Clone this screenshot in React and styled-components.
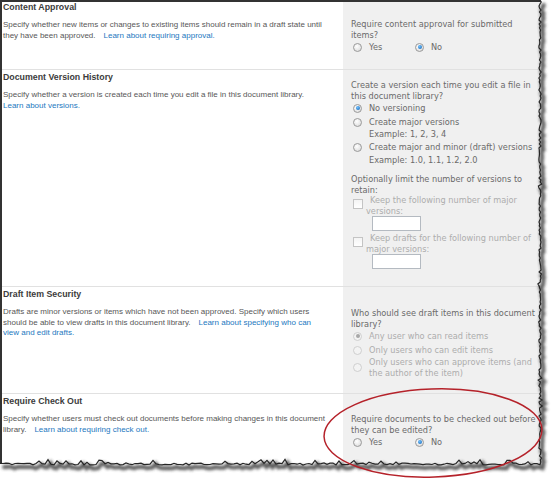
import React from 'react';
import styled, { createGlobalStyle } from 'styled-components';

const GlobalStyle = createGlobalStyle`
  html, body {
    margin: 0;
    padding: 0;
    background: #fff;
    overflow: hidden;
  }
`;

const Page = styled.div`
  position: relative;
  width: 554px;
  height: 480px;
  overflow: hidden;
  background: #fff;
`;

const Frame = styled.div`
  box-sizing: border-box;
  width: 554px;
  height: 480px;
  border-top: 2px solid #333;
  border-left: 2px solid #333;
  display: flex;
  flex-direction: column;
`;

const Section = styled.div`
  display: grid;
  grid-template-columns: 341px 1fr;
  height: ${(p) => p.$h}px;
  flex: ${(p) => (p.$grow ? 1 : 'none')};
  border-top: ${(p) => (p.$first ? 'none' : '1px solid #e1e1e1')};
`;

const Info = styled.div`
  padding: ${(p) => p.$pt}px 0 0 1px;
  font-family: 'Liberation Sans', Arial, sans-serif;
`;

const Title = styled.div`
  font-size: 8.8px;
  font-weight: bold;
  line-height: 10px;
  color: #3c3c3c;
  white-space: nowrap;
`;

const Desc = styled.div`
  margin-top: 8px;
  font-size: 8px;
  line-height: 10.5px;
  color: #575757;
  white-space: nowrap;
`;

const Link = styled.a`
  color: #1c78c0;
  text-decoration: none;
  margin-left: ${(p) => p.$gap || 0}px;
`;

const Controls = styled.div`
  background: #f0f0f0;
  padding: ${(p) => p.$pt}px 0 0 8px;
  font-family: 'DejaVu Sans', Verdana, sans-serif;
  font-size: 8.2px;
  line-height: 10.5px;
  color: #6a6a6a;
  white-space: nowrap;
`;

const Question = styled.div`
  color: ${(p) => (p.$off ? '#adadad' : '#6a6a6a')};
  margin-top: ${(p) => p.$mt || 0}px;
`;

const Row = styled.div`
  display: flex;
  align-items: center;
`;

const Choice = styled.div`
  display: flex;
  align-items: center;
  width: ${(p) => (p.$w ? `${p.$w}px` : 'auto')};
  min-height: 14px;
  padding-left: 2px;
  color: ${(p) => (p.$off ? '#adadad' : '#6a6a6a')};
`;

const Radio = styled.span`
  position: relative;
  box-sizing: border-box;
  flex: none;
  width: 9px;
  height: 9px;
  border-radius: 50%;
  border: 1px solid ${(p) => (p.$off ? '#cfcfcf' : '#9a9a9a')};
  background: ${(p) => (p.$off ? '#f3f3f3' : 'radial-gradient(circle at 40% 35%, #fff, #d6d6d6)')};
  margin-right: 7px;

  &::after {
    content: '';
    display: ${(p) => (p.$on ? 'block' : 'none')};
    position: absolute;
    left: 1.5px;
    top: 1.5px;
    width: 4px;
    height: 4px;
    border-radius: 50%;
    background: ${(p) => (p.$off ? '#a8a8a8' : 'radial-gradient(circle at 40% 35%, #6fc0ff, #0d5fb0)')};
  }
`;

const Example = styled.div`
  padding-left: 18px;
  line-height: 11.5px;
`;

const CheckItem = styled.div`
  display: flex;
  align-items: flex-start;
  margin-top: ${(p) => p.$mt || 0}px;
  padding-left: 2px;
  color: #adadad;
`;

const Check = styled.span`
  box-sizing: border-box;
  flex: none;
  width: 10px;
  height: 10px;
  margin-top: 4px;
  margin-right: 3px;
  border: 1px solid #c4c4c4;
  background: linear-gradient(#f4f4f4, #fff);
`;

const Indent = styled.span`
  padding-left: 4px;
`;

const NumBox = styled.div`
  box-sizing: border-box;
  width: 49px;
  height: 15px;
  margin-left: 6px;
  background: #fff;
  border: 1px solid #b4bac1;
`;

const Overlay = styled.svg`
  position: absolute;
  left: 0;
  top: 0;
  pointer-events: none;
`;

function makeRand(seed) {
  let s = seed;
  return () => {
    s = (s * 1103515245 + 12345) % 2147483648;
    return s / 2147483648;
  };
}

function TornEdge() {
  const rand = makeRand(42);
  const pts = [];
  for (let y = 0; y <= 462; y += 2) {
    const big = rand() > 0.85 ? (rand() - 0.5) * 3 : 0;
    pts.push([540 + (rand() - 0.5) * 2.2 + big, y]);
  }
  for (let x = 540; x >= 0; x -= 3) {
    const bump = rand() > 0.88 ? -2 - rand() * 2 : 0;
    pts.push([x, 464 + (rand() - 0.5) * 2 + bump]);
  }
  const line = pts.map((p) => `${p[0].toFixed(1)},${p[1].toFixed(1)}`).join(' ');
  const outside = `M540,0 L${line} L0,480 L554,480 L554,0 Z`;

  return (
    <Overlay width="554" height="480" viewBox="0 0 554 480">
      <defs>
        <filter id="blur" x="-10%" y="-10%" width="120%" height="120%">
          <feGaussianBlur stdDeviation="1.4" />
        </filter>
      </defs>
      <path d={outside} fill="#fff" />
      <polyline
        points={line}
        transform="translate(2.5 3.5)"
        fill="none"
        stroke="#333"
        strokeWidth="4"
        opacity="0.8"
        filter="url(#blur)"
      />
      <polyline points={line} fill="none" stroke="#262626" strokeWidth="1.2" />
      <ellipse
        cx="433"
        cy="433"
        rx="109"
        ry="44"
        transform="rotate(-2 433 433)"
        fill="none"
        stroke="#b5222a"
        strokeWidth="1.5"
      />
    </Overlay>
  );
}

function App() {
  return (
    <Page>
      <GlobalStyle />
      <Frame>
        {/* Content Approval */}
        <Section $first $h={67}>
          <Info $pt={0}>
            <Title>Content Approval</Title>
            <Desc>
              Specify whether new items or changes to existing items should remain in a draft state until
              <br />
              they have been approved.<Link $gap={8}>Learn about requiring approval.</Link>
            </Desc>
          </Info>
          <Controls $pt={17}>
            <Question>
              Require content approval for submitted
              <br />
              items?
            </Question>
            <Row>
              <Choice $w={60}>
                <Radio />
                Yes
              </Choice>
              <Choice>
                <Radio $on />
                No
              </Choice>
            </Row>
          </Controls>
        </Section>

        {/* Document Version History */}
        <Section $h={216}>
          <Info $pt={2}>
            <Title>Document Version History</Title>
            <Desc>
              Specify whether a version is created each time you edit a file in this document library.
              <br />
              <Link>Learn about versions.</Link>
            </Desc>
          </Info>
          <Controls $pt={10}>
            <Question>
              Create a version each time you edit a file in
              <br />
              this document library?
            </Question>
            <Choice>
              <Radio $on />
              No versioning
            </Choice>
            <Choice>
              <Radio />
              Create major versions
            </Choice>
            <Example>Example: 1, 2, 3, 4</Example>
            <Choice>
              <Radio />
              Create major and minor (draft) versions
            </Choice>
            <Example>Example: 1.0, 1.1, 1.2, 2.0</Example>
            <Question $mt={8}>
              Optionally limit the number of versions to
              <br />
              retain:
            </Question>
            <CheckItem>
              <Check />
              <div>
                <Indent>Keep the following number of major</Indent>
                <br />
                versions:
                <NumBox />
              </div>
            </CheckItem>
            <CheckItem $mt={2}>
              <Check />
              <div>
                <Indent>Keep drafts for the following number of</Indent>
                <br />
                major versions:
                <NumBox />
              </div>
            </CheckItem>
          </Controls>
        </Section>

        {/* Draft Item Security */}
        <Section $h={106}>
          <Info $pt={2}>
            <Title>Draft Item Security</Title>
            <Desc>
              Drafts are minor versions or items which have not been approved. Specify which users
              <br />
              should be able to view drafts in this document library.
              <Link $gap={8}>Learn about specifying who can</Link>
              <br />
              <Link>view and edit drafts.</Link>
            </Desc>
          </Info>
          <Controls $pt={21}>
            <Question>
              Who should see draft items in this document
              <br />
              library?
            </Question>
            <Choice $off>
              <Radio $off $on />
              Any user who can read items
            </Choice>
            <Choice $off>
              <Radio $off />
              Only users who can edit items
            </Choice>
            <Choice $off>
              <Radio $off />
              <div>
                Only users who can approve items (and
                <br />
                the author of the item)
              </div>
            </Choice>
          </Controls>
        </Section>

        {/* Require Check Out */}
        <Section $grow>
          <Info $pt={2}>
            <Title>Require Check Out</Title>
            <Desc>
              Specify whether users must check out documents before making changes in this document
              <br />
              library.<Link $gap={8}>Learn about requiring check out.</Link>
            </Desc>
          </Info>
          <Controls $pt={20}>
            <Question>
              Require documents to be checked out before
              <br />
              they can be edited?
            </Question>
            <Row>
              <Choice $w={60}>
                <Radio />
                Yes
              </Choice>
              <Choice>
                <Radio $on />
                No
              </Choice>
            </Row>
          </Controls>
        </Section>
      </Frame>
      <TornEdge />
    </Page>
  );
}

export default App;
